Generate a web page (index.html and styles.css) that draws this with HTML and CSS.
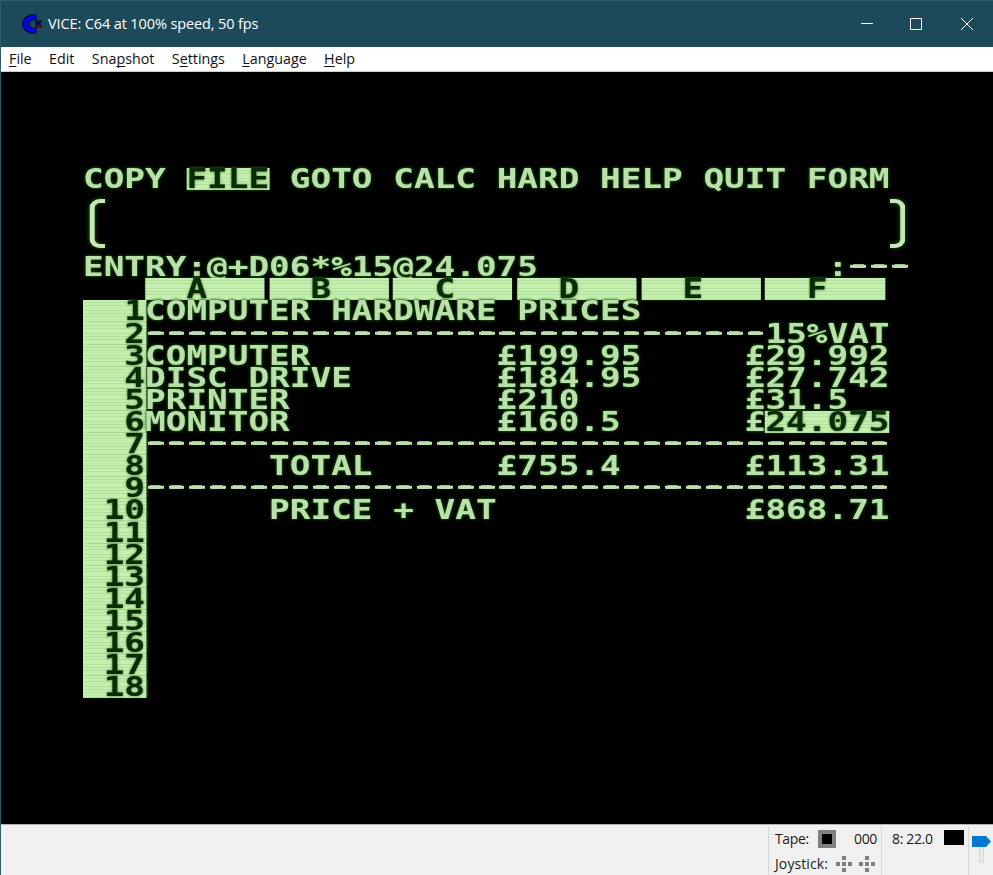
FILE: index.html
```html
<!DOCTYPE html>
<html lang="en">
<head>
<meta charset="utf-8">
<title>VICE</title>
<link rel="stylesheet" href="styles.css">
</head>
<body>
<div class="window">
<header class="titlebar">
<svg class="logo" width="20" height="20" viewBox="0 0 20 20"><path d="M14 1H8L3 4L1 8v4l2 4l5 3h6v-5H9l-2-2V8l2-2h5z" fill="#0000fe" stroke="#00082a" stroke-width="1.2"/><path d="M14 7h6l-2 2.6h-4z" fill="#000ea0" stroke="#00082a"/><path d="M14 10.2h4l2 2.6h-6z" fill="#a00010" stroke="#00082a"/></svg>
<span class="title">VICE: C64 at 100% speed, 50 fps</span>
<svg class="controls" width="112" height="12" viewBox="0 0 112 12" fill="none" stroke="#fff"><path d="M0 5.5h12M49.5.5h11v11h-11zM100 0l12 12M112 0l-12 12"/></svg>
</header>
<nav class="menubar"><span><u>F</u>ile</span><span>Edit</span><span>Sna<u>p</u>shot</span><span>S<u>e</u>ttings</span><span><u>L</u>anguage</span><span><u>H</u>elp</span></nav>
<main class="display">
<div class="screen">
<div class="row">COPY <span class="inv">FILE</span> GOTO CALC HARD HELP QUIT FORM</div>
<div class="brackets"><i class="bracket"></i><i class="bracket right"></i></div>
<div class="row entry"><span>ENTRY:@+D06*%15@24.075</span><span>:<span class="dash">---</span></span></div>
<div class="row heads"><b>A</b><b>B</b><b>C</b><b>D</b><b>E</b><b>F</b></div>
<div class="row"><span class="num">1</span>COMPUTER HARDWARE PRICES</div>
<div class="row"><span class="num">2</span><span class="dash">------------------------------</span>15%VAT</div>
<div class="row"><span class="num">3</span><span class="name">COMPUTER</span><span class="price">£199.95</span>£29.992</div>
<div class="row"><span class="num">4</span><span class="name">DISC DRIVE</span><span class="price">£184.95</span>£27.742</div>
<div class="row"><span class="num">5</span><span class="name">PRINTER</span><span class="price">£210</span>£31.5</div>
<div class="row"><span class="num">6</span><span class="name">MONITOR</span><span class="price">£160.5</span>£<span class="inv">24.075</span></div>
<div class="row"><span class="num">7</span><span class="dash">------------------------------------</span></div>
<div class="row"><span class="num">8</span><span class="name indent">TOTAL</span><span class="price">£755.4</span>£113.31</div>
<div class="row"><span class="num">9</span><span class="dash">------------------------------------</span></div>
<div class="row"><span class="num">10</span><span class="name indent">PRICE + VAT</span><span class="price"></span>£868.71</div>
<div class="row"><span class="num">11</span></div>
<div class="row"><span class="num">12</span></div>
<div class="row"><span class="num">13</span></div>
<div class="row"><span class="num">14</span></div>
<div class="row"><span class="num">15</span></div>
<div class="row"><span class="num">16</span></div>
<div class="row"><span class="num">17</span></div>
<div class="row"><span class="num">18</span></div>
</div>
</main>
<footer class="status">
<section class="tape">
<div class="line"><span class="lbl">Tape:</span><i class="stop"></i><span class="lbl count">000</span></div>
<div class="line"><span class="lbl joylbl">Joystick:</span><svg class="joys" width="40" height="16" viewBox="0 0 40 16" fill="#808080"><path id="joy" d="M6 0h4v4H6zM0 6h4v4H0zM6 6h4v4H6zM12 6h4v4h-4zM6 12h4v4H6z"/><use href="#joy" x="23"/></svg></div>
</section>
<section class="drive"><span class="lbl">8: 22.0</span><i class="led"></i></section>
<section class="volume"><svg width="20" height="36" viewBox="0 0 20 36"><path d="M7.5 10.5h4v16h-4z" fill="#e7eaea" stroke="#d6d6d6"/><path d="M0 0h14l5 5.5l-5 5.5H0z" fill="#0078d7"/></svg></section>
</footer>
</div>
</body>
</html>
```
FILE: styles.css
```css
* { box-sizing: border-box; }
body { margin: 0; background: #000; font-family: "Open Sans", sans-serif; }
.window { width: 993px; height: 875px; display: flex; flex-direction: column; border-left: 1px solid #2e5a69; overflow: hidden; }
.titlebar { height: 47px; flex: none; background: #1c4a5a; border-top: 1px solid #315e6c; display: flex; align-items: center; padding: 0 20px 0 21px; color: #fff; }
.logo { margin-right: 6px; }
.title { font-size: 14.5px; white-space: nowrap; letter-spacing: -0.12px; margin-top: -2px; }
.controls { margin-left: auto; }
.menubar { height: 25px; flex: none; background: #fff; border-bottom: 1px solid #ccc; display: flex; align-items: center; gap: 17.4px; padding: 0 0 1px 8px; font-size: 14.3px; color: #111; white-space: nowrap; letter-spacing: 0; }
u { text-underline-offset: 2px; text-decoration-thickness: 1px; text-decoration-skip-ink: none; }
.display { flex: 1; background: #000; padding: 95.8px 0 0 82.2px; overflow: hidden; }
.screen { width: 40ch; font: bold 26.5px "DejaVu Sans Mono", monospace; line-height: 22.11px; color: #bce0ac; text-shadow: 0 0 3px #175c0c, 0 0 2px #1c6a10; transform: scaleX(1.2962); transform-origin: 0 0; }
.row { height: 22.11px; display: flex; white-space: pre; }
.inv, .num, .heads b { background: repeating-linear-gradient(#c3f0ad 0 2px, #b3dfa0 2px 2.76px); color: #0b2b06; text-shadow: 0 0 2px #2c6a1e; }
.inv, .heads b { box-shadow: 0 0 2px #2a6b1c; }
.num { width: 3.05ch; margin-right: -0.05ch; padding-right: 0.05ch; flex: none; text-align: right; box-shadow: 2px 0 2px -1px #2a6b1c; }
.brackets { height: 66.33px; display: flex; justify-content: space-between; padding: 9px 0 0 5.4px; }
.bracket { width: 11.5px; height: 49px; border: 4px solid #c4e9b4; border-left-width: 4.6px; border-right: 0; border-radius: 8px 0 0 8px / 9px 0 0 9px; filter: drop-shadow(0 0 2px #1c6a10); }
.bracket.right { transform: scaleX(-1); margin-right: 3.8px; }
.entry { justify-content: space-between; }
.heads { padding-left: 3ch; gap: 0.22ch; }
.heads b { width: 5.78ch; padding-left: 2ch; }
.name { width: 17ch; }
.indent { padding-left: 6ch; }
.price { width: 12ch; }
.dash { display: inline-block; height: 22px; transform: translateY(-2.2px); background: repeating-linear-gradient(90deg, transparent 0 0.13ch, #bce0ac 0.13ch 0.89ch, transparent 0.89ch 1ch) 0 11px / 100% 3px no-repeat; text-shadow: none; }
.status { height: 51px; flex: none; background: #f0f0f0; border-top: 1px solid #b4b4b4; display: flex; justify-content: flex-end; font-size: 14px; color: #1b1b1b; padding-top: 1px; }
.status section { border-left: 1px solid #d7d7d7; height: 50px; }
.lbl { letter-spacing: -0.35px; white-space: nowrap; }
.joylbl { letter-spacing: 0.1px; }
.tape { width: 113px; padding-left: 6px; }
.line { height: 25px; display: flex; align-items: center; }
.stop { width: 18px; height: 18px; background: #000; border: 4px solid #808080; margin-left: 9px; }
.count { margin-left: auto; padding-right: 4px; }
.joys { margin-left: 8px; }
.drive { width: 87px; display: flex; align-items: flex-start; padding: 3px 4px 0 10px; justify-content: space-between; }
.led { width: 20px; height: 15px; background: #000; margin-top: 1px; }
.volume { width: 25px; padding: 10px 0 0 3px; }
```
